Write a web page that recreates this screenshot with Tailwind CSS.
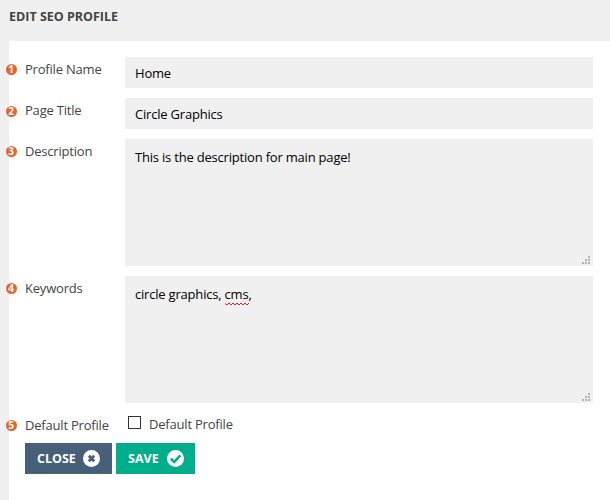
<!DOCTYPE html>
<html>
<head>
<meta charset="utf-8">
<script src="https://cdn.jsdelivr.net/npm/@tailwindcss/browser@4"></script>
</head>
<body class="w-[610px] h-[500px] overflow-hidden bg-[#f0f0f0] font-['Open_Sans',sans-serif] text-[13px] tracking-[-0.2px] text-[#444]">
  <h1 class="h-[41px] pl-[9px] pt-[9px] text-[12.5px] leading-[16px] font-bold tracking-normal text-[#444] uppercase">Edit SEO Profile</h1>
  <form class="ml-[9px] h-[459px] bg-white pt-[16px] pr-[17px] flex flex-col">
    <div class="flex mb-[10px]">
      <label class="relative w-[116px] pl-[16px] pt-[3px] leading-[18px]">
        <span class="absolute left-[-3.5px] top-[6.5px] flex size-[11px] items-center justify-center rounded-full bg-[#e8642c] text-[10px] leading-none font-bold tracking-normal text-white">1</span>Profile Name</label>
      <input class="h-[31px] flex-1 bg-[#f0f0f0] px-[10px] text-[13px] tracking-[-0.2px] text-black outline-none" value="Home">
    </div>
    <div class="flex mb-[10px]">
      <label class="relative w-[116px] pl-[16px] pt-[3px] leading-[18px]">
        <span class="absolute left-[-3.5px] top-[7.5px] flex size-[11px] items-center justify-center rounded-full bg-[#e8642c] text-[10px] leading-none font-bold tracking-normal text-white">2</span>Page Title</label>
      <input class="h-[31px] flex-1 bg-[#f0f0f0] px-[10px] text-[13px] tracking-[-0.2px] text-black outline-none" value="Circle Graphics">
    </div>
    <div class="flex mb-[10px]">
      <label class="relative w-[116px] pl-[16px] pt-[3px] leading-[18px]">
        <span class="absolute left-[-3.5px] top-[6.5px] flex size-[11px] items-center justify-center rounded-full bg-[#e8642c] text-[10px] leading-none font-bold tracking-normal text-white">3</span>Description</label>
      <div class="relative flex flex-1">
        <textarea class="h-[127px] w-full resize-none bg-[#f0f0f0] px-[10px] pt-[9px] pb-[8px] text-[13px] leading-[18px] tracking-[-0.2px] text-black outline-none">This is the description for main page!</textarea>
        <svg class="absolute right-[3px] bottom-[2px]" width="8" height="8" viewBox="0 0 8 8" fill="#b4b4b4"><rect x="6" y="0" width="2" height="2"/><rect x="3" y="3" width="2" height="2"/><rect x="6" y="3" width="2" height="2"/><rect x="0" y="6" width="2" height="2"/><rect x="3" y="6" width="2" height="2"/><rect x="6" y="6" width="2" height="2"/></svg>
      </div>
    </div>
    <div class="flex mb-[10px]">
      <label class="relative w-[116px] pl-[16px] pt-[3px] leading-[18px]">
        <span class="absolute left-[-3.5px] top-[6.5px] flex size-[11px] items-center justify-center rounded-full bg-[#e8642c] text-[10px] leading-none font-bold tracking-normal text-white">4</span>Keywords</label>
      <div class="relative flex flex-1">
        <textarea class="h-[127px] w-full resize-none bg-[#f0f0f0] px-[10px] pt-[9px] pb-[8px] text-[13px] leading-[18px] tracking-[-0.2px] text-black outline-none">circle graphics, cms,</textarea>
        <svg class="absolute left-[100px] top-[26px]" width="24" height="4" viewBox="0 0 24 4" fill="none" stroke="#e02020" stroke-width="1"><path d="M0 1.5 2 3 4 1 6 3 8 1 10 3 12 1 14 3 16 1 18 3 20 1 22 3 24 1"/></svg>
        <svg class="absolute right-[3px] bottom-[2px]" width="8" height="8" viewBox="0 0 8 8" fill="#b4b4b4"><rect x="6" y="0" width="2" height="2"/><rect x="3" y="3" width="2" height="2"/><rect x="6" y="3" width="2" height="2"/><rect x="0" y="6" width="2" height="2"/><rect x="3" y="6" width="2" height="2"/><rect x="6" y="6" width="2" height="2"/></svg>
      </div>
    </div>
    <div class="flex h-[30px]">
      <label class="relative w-[116px] pl-[16px] pt-[3px] leading-[18px]">
        <span class="absolute left-[-3.5px] top-[6.5px] flex size-[11px] items-center justify-center rounded-full bg-[#e8642c] text-[10px] leading-none font-bold tracking-normal text-white">5</span>Default Profile</label>
      <label class="flex items-start pl-[3px] pt-[2px] leading-[18px]">
        <span class="mr-[8px] mt-[1px] size-[13px] border border-[#333] bg-white"></span>Default Profile</label>
    </div>
    <div class="flex gap-[4px] pl-[16px]">
      <button type="button" class="flex h-[31px] w-[87px] items-center gap-[7px] bg-[#46607a] pl-[12px] text-[12.5px] font-bold tracking-normal text-white"><span class="pt-[2px]">CLOSE</span>
        <svg width="17" height="17" viewBox="0 0 17 17"><circle cx="8.5" cy="8.5" r="8.5" fill="#fff"/><path d="M5.8 5.8 11.2 11.2M11.2 5.8 5.8 11.2" stroke="#46607a" stroke-width="2.8"/></svg>
      </button>
      <button type="button" class="flex h-[31px] w-[79px] items-center gap-[8px] bg-[#00ae8c] pl-[12px] text-[12.5px] font-bold tracking-normal text-white"><span class="pt-[2px]">SAVE</span>
        <svg width="17" height="17" viewBox="0 0 17 17"><circle cx="8.5" cy="8.5" r="8.5" fill="#fff"/><path d="M3.8 8.7 7.2 12 13.4 5.4" fill="none" stroke="#00ae8c" stroke-width="2.6"/></svg>
      </button>
    </div>
  </form>
</body>
</html>
